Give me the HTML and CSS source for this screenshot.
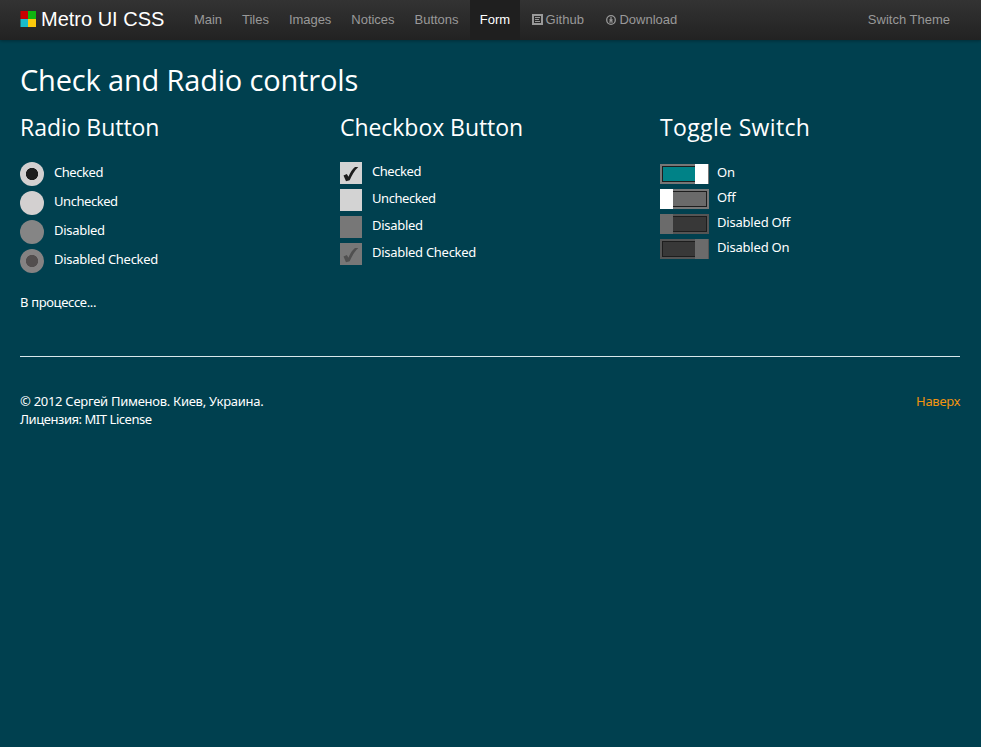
FILE: index.html
```html
<!DOCTYPE html>
<html lang="ru">
<head>
<meta charset="utf-8">
<title>Metro UI CSS</title>
<link rel="stylesheet" href="styles.css">
</head>
<body>
<header class="navbar">
  <a class="brand"><svg class="logo" width="16" height="16" viewBox="0 0 16 16"><path fill="#c80000" d="M.5 0H8v8H.5z"/><path fill="#10b510" d="M8 0h8v8H8z"/><path fill="#19bccb" d="M.5 8H8v8H.5z"/><path fill="#fbc90c" d="M8 8h8v8H8z"/></svg><span>Metro UI CSS</span></a>
  <nav class="menu">
    <a>Main</a><a>Tiles</a><a>Images</a><a>Notices</a><a>Buttons</a><a class="active">Form</a>
    <a class="github"><svg width="11" height="11" viewBox="0 0 11 11" fill="none" stroke="#999"><path stroke-width="2" d="M1 1h9v9H1z"/><path stroke-width="1" d="M3 3.5h5M3 5.5h4M3 7.5h5"/></svg><span>Github</span></a>
    <a class="download"><svg width="10" height="10" viewBox="0 0 10 10" fill="none" stroke="#999"><circle cx="5" cy="5" r="4.3" stroke-width="1.3"/><path stroke-width="1.2" d="M5 2v3.500M3.500 4.500L5 6l1.500-1.500M3 7h4"/></svg><span>Download</span></a>
  </nav>
  <a class="theme">Switch Theme</a>
</header>
<main class="page">
  <h1>Check and Radio controls</h1>
  <div class="columns">
    <section class="radios">
      <h2>Radio Button</h2>
      <label><i class="radio on"></i><span class="tight">Checked</span></label>
      <label><i class="radio"></i><span class="tight">Unchecked</span></label>
      <label class="disabled"><i class="radio"></i><span>Disabled</span></label>
      <label class="disabled"><i class="radio on"></i><span>Disabled Checked</span></label>
    </section>
    <section class="checks">
      <h2>Checkbox Button</h2>
      <label><i class="check"><svg width="22" height="22" viewBox="0 0 22 22"><path d="M3.500 13.500l3.300-1.400 1.700 2.700C10 10.500 12.500 7 15 5h3.300C14.500 8.500 12 13 9.700 18.200l-3.700 1z"/></svg></i><span class="tight">Checked</span></label>
      <label><i class="check"></i><span class="tight">Unchecked</span></label>
      <label class="disabled"><i class="check"></i><span>Disabled</span></label>
      <label class="disabled"><i class="check"><svg width="22" height="22" viewBox="0 0 22 22"><path d="M3.500 13.500l3.300-1.400 1.700 2.700C10 10.500 12.500 7 15 5h3.300C14.500 8.500 12 13 9.700 18.200l-3.700 1z"/></svg></i><span>Disabled Checked</span></label>
    </section>
    <section class="switches">
      <h2>Toggle Switch</h2>
      <label><i class="switch on"></i><span>On</span></label>
      <label><i class="switch"></i><span>Off</span></label>
      <label class="disabled"><i class="switch"></i><span>Disabled Off</span></label>
      <label class="disabled"><i class="switch on"></i><span>Disabled On</span></label>
    </section>
  </div>
  <p class="status">В процессе...</p>
  <footer>
    <div><span>© 2012 Сергей Пименов. Киев, Украина.</span><br><span class="license">Лицензия: MIT License</span></div>
    <a class="top">Наверх</a>
  </footer>
</main>
</body>
</html>
```
FILE: styles.css
```css
* { box-sizing: border-box; }
body { margin: 0; min-height: 747px; background: #00404f; color: #fff; font: 13px/18px "Noto Sans", "Open Sans", sans-serif; letter-spacing: -.28px; }
.navbar { display: flex; height: 40px; padding: 0 21px 0 20px; background: linear-gradient(#333, #222); box-shadow: 0 1px 3px rgba(0,0,0,.3); font: 13px/40px "Liberation Sans", sans-serif; letter-spacing: 0; color: #999; }
.brand { display: flex; width: 164px; color: #fff; font-size: 20px; line-height: 38px; white-space: nowrap; }
.logo { margin: 10.500px 5px 0 0; }
.menu { display: flex; }
.menu a { display: flex; padding: 0 10px; white-space: nowrap; }
.menu a:nth-child(5) { padding-right: 11.200px; }
.menu .active { background: #1f1f1f; color: #fff; padding-right: 9.500px; }
.menu a:nth-child(-n+4) { letter-spacing: -.03px; }
.menu svg { margin: 14px 3px 0 2px; flex: none; }
.menu .download svg { margin: 15px 3px 0 2.500px; }
.theme { margin-left: auto; padding-right: 10px; white-space: nowrap; }
.page { width: 940px; margin: 0 auto 0 20px; }
h1, h2 { margin: 0; white-space: nowrap; font-family: "Open Sans", sans-serif; font-weight: 400; letter-spacing: -.05px; }
h1 { padding-top: 20px; font-size: 29px; line-height: 40px; letter-spacing: -.17px; }
h2 { height: 52px; margin-top: 9px; font-size: 23px; line-height: 36px; }
.switches h2 { letter-spacing: .35px; }
.columns { display: grid; grid-template-columns: 320px 320px 300px; height: 193px; }
label { display: flex; white-space: nowrap; }
h2 + label { margin-top: 1px; }
.tight { letter-spacing: -.45px; }
.radio { width: 24px; height: 24px; margin-right: 10px; border-radius: 50%; background: #d3d0d0; }
.radio.on { background: radial-gradient(circle, #1d1d1d 5.7px, #d3d0d0 6.5px); }
.disabled .radio { background: #858585; }
.disabled .radio.on { background: radial-gradient(circle, #534e4e 5.7px, #858282 6.5px); }
.radios label { height: 29px; line-height: 20px; }
.check { width: 22px; height: 22px; margin-right: 10px; background: #d3d3d3; }
.check svg { display: block; fill: #1d1d1d; }
.disabled .check { background: #777; }
.disabled .check svg { fill: #505050; }
.checks label { height: 27px; line-height: 18px; }
.switch { display: flex; width: 49px; height: 20px; margin: 2px 8px 0 0; padding: 1px; border: 1px solid #777; background: #6a6a6a; box-shadow: inset 0 0 0 1px #777, inset 0 0 0 2px #1d1d1d; }
.switch::before { content: ""; flex: none; width: 13px; height: 20px; margin: -2px; background: #fff; }
.switch.on { background: #008287; justify-content: flex-end; }
.switch.on::before { margin-right: -1px; }
.disabled .switch { background: #383838; border-color: #555; box-shadow: inset 0 0 0 1px #555, inset 0 0 0 2px #1d1d1d; }
.disabled .switch::before { background: #6b6b6b; }
.switches label { height: 25px; line-height: 20px; letter-spacing: -.2px; }
.status { margin: 0; height: 64px; border-bottom: 1px solid #d9e8eb; letter-spacing: -.35px; }
footer { display: flex; justify-content: space-between; padding-top: 35px; }
.license { letter-spacing: -.45px; }
.top { color: #f09410; }
```
